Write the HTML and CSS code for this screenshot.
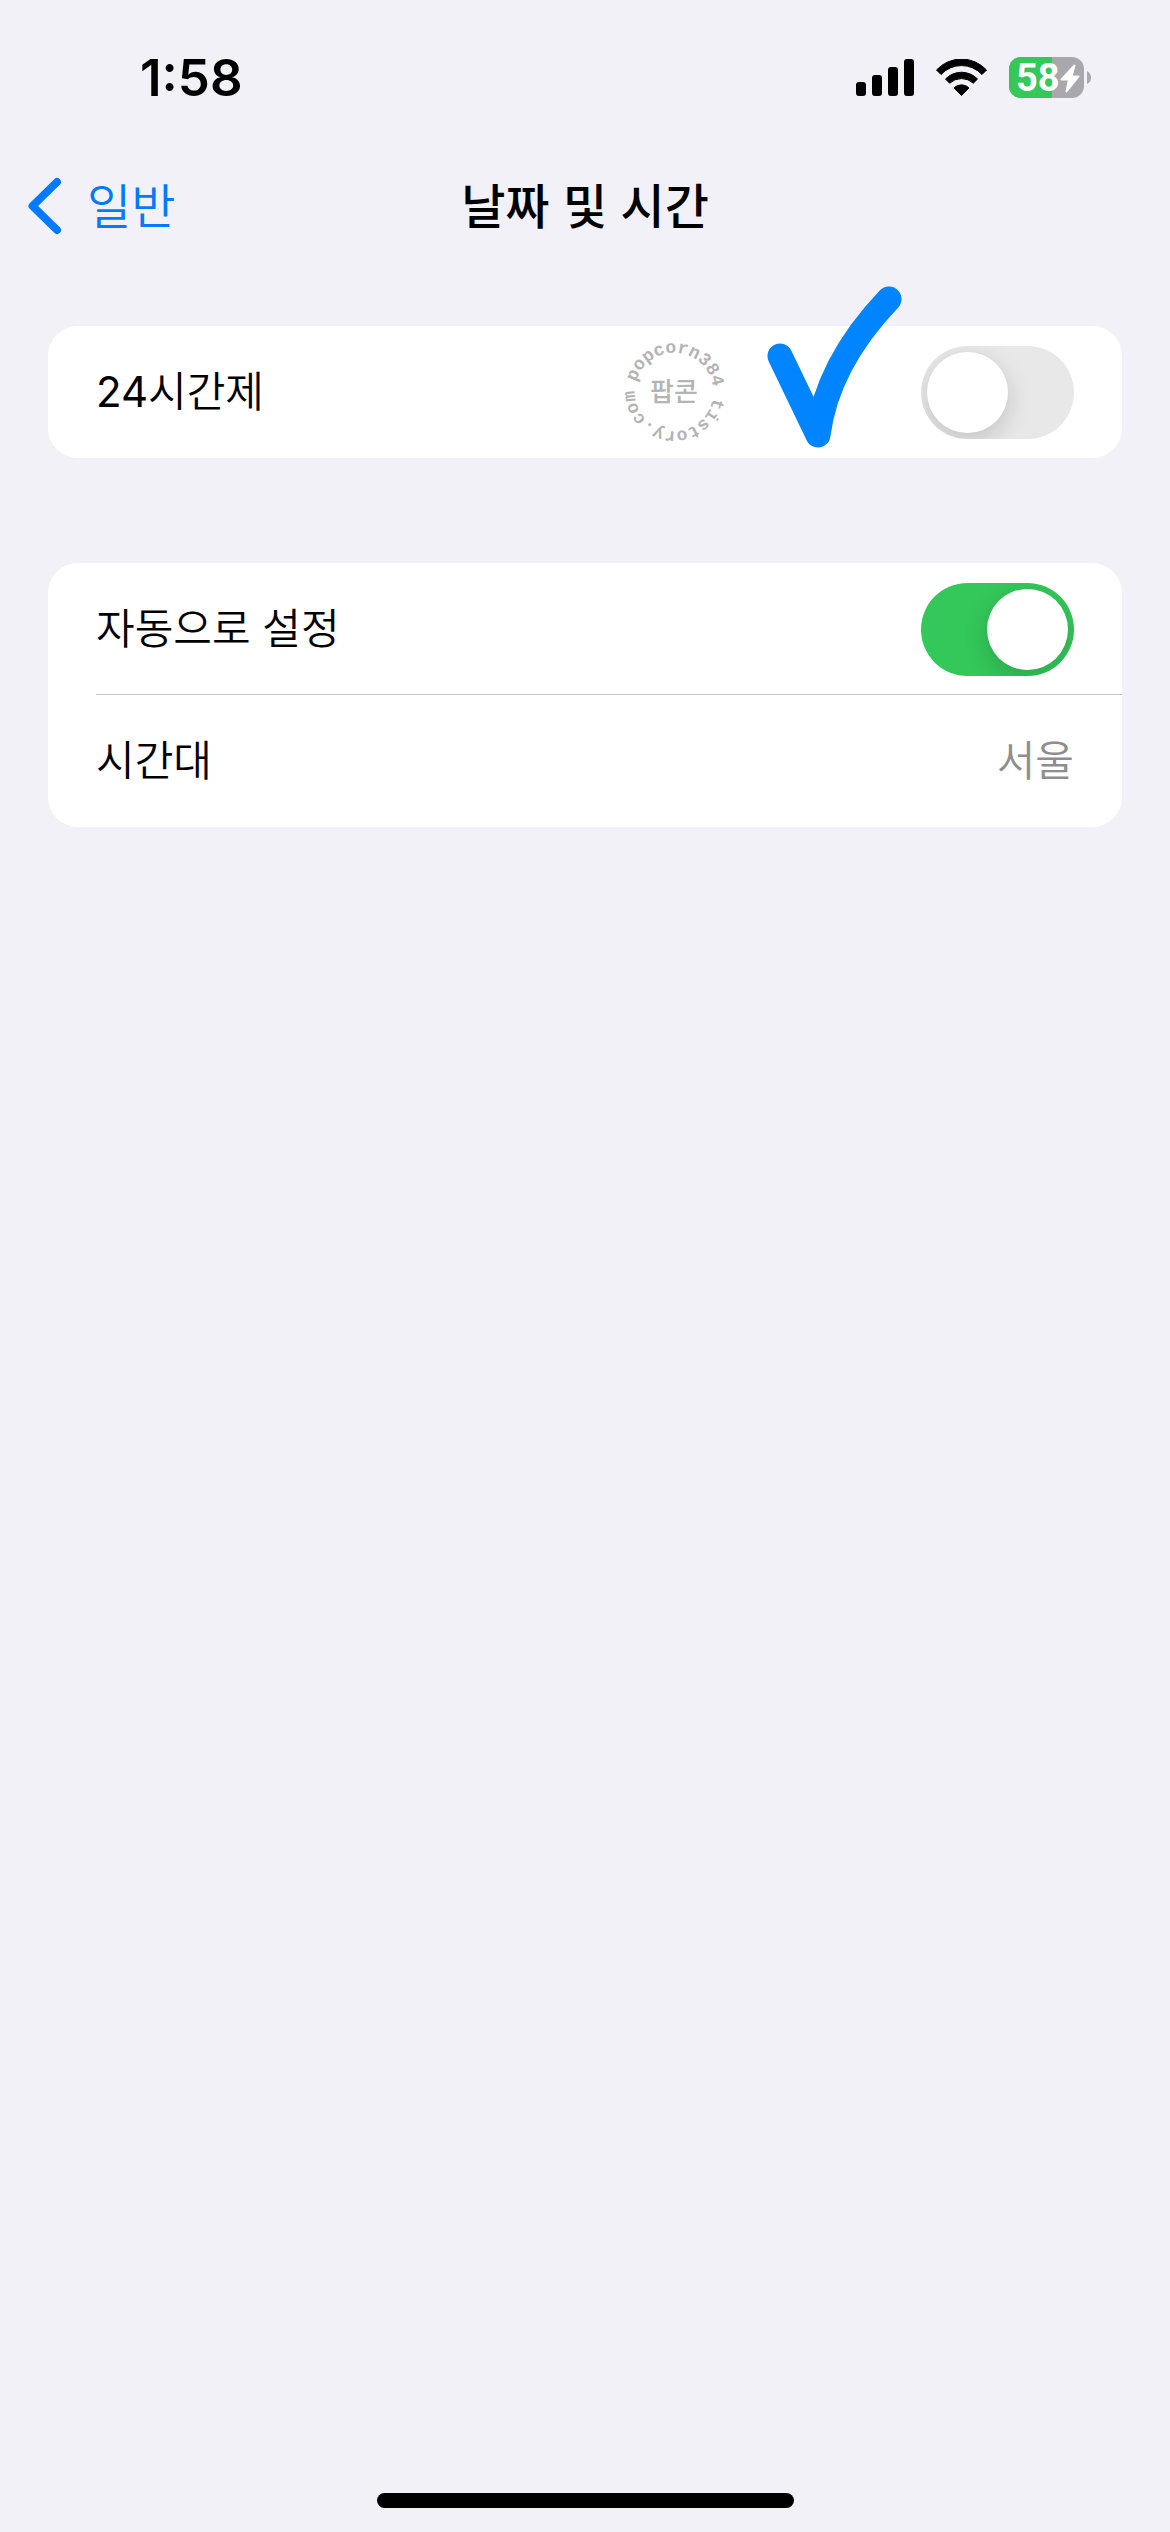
FILE: index.html
```html
<!DOCTYPE html>
<html lang="ko">
<head>
  <meta charset="utf-8">
  <meta name="viewport" content="width=device-width, initial-scale=1">
  <title>날짜 및 시간</title>
  <link rel="stylesheet" href="styles.css">
</head>
<body class="screen">
  <div class="status-bar">
    <time class="clock">1:58</time>
    <div class="status-icons">
      <svg class="signal" viewBox="0 0 58 37" aria-hidden="true">
        <rect x="0" y="23" width="10" height="14" rx="3"/>
        <rect x="16" y="16" width="10" height="21" rx="3"/>
        <rect x="32" y="8" width="10" height="29" rx="3"/>
        <rect x="48" y="0" width="10" height="37" rx="3"/>
      </svg>
      <svg class="wifi" viewBox="0 0 51 37" aria-hidden="true">
        <path d="M0.5 11A34 34 0 0 1 50.5 11L46 15.500A28 28 0 0 0 5 15.500Z"/>
        <path d="M9.500 20A22.300 22.300 0 0 1 41.500 20L37.300 24.200A17.400 17.400 0 0 0 13.700 24.200Z"/>
        <path d="M18 29A10.500 10.500 0 0 1 33 29L25.500 36.500Z"/>
      </svg>
      <svg class="battery" viewBox="0 0 82 41" role="img" aria-label="58%">
        <defs>
          <clipPath id="battery-shape"><rect width="75" height="41" rx="12"/></clipPath>
        </defs>
        <g clip-path="url(#battery-shape)">
          <rect class="battery-empty" width="75" height="41"/>
          <rect class="battery-charge" width="43" height="41"/>
        </g>
        <path class="battery-empty" d="M78 14Q82 16 82 20.500T78 27Z"/>
        <text class="battery-level" x="7" y="34">58</text>
        <path class="battery-bolt" d="M65.500 8.500L52.500 22.500H60L57.500 34.500L69.500 19.500H62.500Z"/>
      </svg>
    </div>
  </div>

  <header class="nav-bar">
    <a class="back" href="#general">
      <svg class="chevron" viewBox="0 0 34 58" aria-hidden="true">
        <path d="M29 5L4.500 29L29 53"/>
      </svg>
      <span class="nav-text">일반</span>
    </a>
    <h1 class="title nav-text">날짜 및 시간</h1>
  </header>

  <main class="settings">
    <section class="card">
      <div class="row">
        <label class="row-text" for="clock-24"><span class="digits">24</span>시간제</label>
        <input class="switch" type="checkbox" role="switch" id="clock-24">
      </div>
      <svg class="stamp" viewBox="-56 -56 112 112">
        <defs>
          <path id="ring" d="M-38 -10A39 39 0 0 1 38 10A39 39 0 0 1 -38 -10"/>
        </defs>
        <text class="stamp-ring"><textPath href="#ring">popcorn384 tistory.com</textPath></text>
        <text class="stamp-name" y="9">팝콘</text>
      </svg>
      <svg class="tick" viewBox="0 0 136 164" aria-hidden="true">
        <path d="M13 71L51 150Q60 79 122 14"/>
      </svg>
    </section>

    <section class="card">
      <div class="row">
        <label class="row-text" for="auto-set">자동으로 설정</label>
        <input class="switch" type="checkbox" role="switch" id="auto-set" checked>
      </div>
      <div class="row">
        <span class="row-text">시간대</span>
        <span class="row-text value">서울</span>
      </div>
    </section>
  </main>

  <div class="home-indicator"></div>
</body>
</html>
```

FILE: styles.css
```css
* {
  box-sizing: border-box;
}

.screen {
  display: flex;
  flex-direction: column;
  min-height: 100vh;
  margin: 0;
  background: #f2f1f7;
  color: #000;
  font-family: Inter, "Noto Sans CJK KR", sans-serif;
  font-size: 42px;
}

.status-bar {
  display: flex;
  align-items: center;
  justify-content: space-between;
  height: 154px;
  padding: 0 79px 0 140px;
}

.clock {
  padding-top: 2px;
  font-size: 51px;
  font-weight: 600;
  line-height: 60px;
}

.status-icons {
  display: flex;
  align-items: center;
  gap: 22px;
}

.signal {
  width: 58px;
  height: 37px;
}

.wifi {
  width: 51px;
  height: 37px;
  stroke: #000;
  stroke-linejoin: round;
}

.battery {
  width: 82px;
  height: 41px;
  overflow: visible;
}

.battery-empty {
  fill: #a9a8ad;
}

.battery-charge {
  fill: #34c759;
}

.battery-level {
  fill: #fff;
  font-family: Roboto, sans-serif;
  font-size: 38px;
  font-weight: 700;
}

.battery-bolt {
  fill: #fff;
  stroke: #fff;
  stroke-width: 2;
  stroke-linejoin: round;
}

.nav-bar {
  display: grid;
  grid-template-columns: 1fr auto 1fr;
  align-items: center;
  height: 104px;
  padding: 0 28px;
  font-family: "Noto Sans CJK KR", sans-serif;
  font-size: 48px;
  line-height: 64px;
}

.back {
  display: flex;
  align-items: center;
  gap: 25px;
  color: #007aff;
  font-weight: 350;
  text-decoration: none;
}

.nav-text {
  padding-bottom: 6px;
}

.chevron {
  width: 34px;
  height: 58px;
  fill: none;
  stroke: #007aff;
  stroke-width: 8;
  stroke-linecap: round;
  stroke-linejoin: round;
}

.title {
  margin: 0;
  font-size: inherit;
  font-weight: 500;
}

.settings {
  display: flex;
  flex: 1;
  flex-direction: column;
  gap: 105px;
  padding: 68px 48px;
}

.card {
  position: relative;
  border-radius: 30px;
  background: #fff;
}

.row {
  display: flex;
  align-items: center;
  justify-content: space-between;
  height: 132px;
  margin-left: 48px;
  padding-right: 48px;
}

.row:not(:first-child) {
  box-shadow: 0 -1px #c6c6c8;
}

.row-text {
  padding-bottom: 7px;
  font-weight: 350;
}

.digits {
  font-weight: 400;
}

.value {
  color: #8e8e8e;
}

.switch {
  width: 153px;
  height: 93px;
  margin: 0;
  padding: 6px;
  border-radius: 47px;
  background: #e8e8e8;
  appearance: none;
  overflow: hidden;
}

.switch::before {
  display: block;
  width: 81px;
  height: 81px;
  border-radius: 50%;
  background: #fff;
  box-shadow: 0 8px 24px rgba(0, 0, 0, 0.16);
  content: "";
}

.switch:checked {
  background: #34c759;
}

.switch:checked::before {
  margin-left: auto;
}

.stamp {
  position: absolute;
  top: 10px;
  right: 392px;
  width: 112px;
  height: 112px;
  fill: #b4b4b4;
}

.stamp-ring {
  font-family: "Liberation Mono", monospace;
  font-size: 18px;
  font-weight: 700;
}

.stamp-name {
  font-family: "Noto Sans CJK KR", sans-serif;
  font-size: 26px;
  font-weight: 500;
  text-anchor: middle;
}

.tick {
  position: absolute;
  top: -41px;
  right: 219px;
  width: 136px;
  height: 164px;
  fill: none;
  stroke: #0084ff;
  stroke-width: 25;
  stroke-linecap: round;
  stroke-linejoin: round;
}

.home-indicator {
  align-self: center;
  width: 417px;
  height: 15px;
  margin-bottom: 24px;
  border-radius: 8px;
  background: #000;
}
```
